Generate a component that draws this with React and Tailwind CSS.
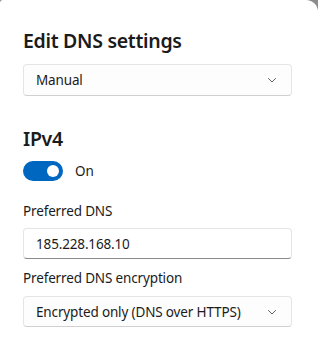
import React from 'react';

const Chevron = () => (
  <svg width="12" height="12" viewBox="0 0 12 12" fill="none" className="text-[#5f5f5f]">
    <path d="M2.5 4.5 6 8l3.5-3.5" stroke="currentColor" strokeWidth="1" strokeLinecap="round" strokeLinejoin="round" />
  </svg>
);

const Select = ({ value, h = 'h-[32px]' }) => (
  <div className={`flex ${h} items-center justify-between rounded-[4px] border border-[#e5e5e5] border-b-[#d0d0d0] bg-[#fdfdfd] pl-[12px] pr-[13px]`}>
    <span className="text-[13.5px] tracking-[-0.15px] text-[#1b1b1b]">{value}</span>
    <Chevron />
  </div>
);

const App = () => {
  return (
    <div className="h-[345px] w-[318px] bg-[#8c8c8c]" style={{ fontFamily: '"Noto Sans", "Open Sans", sans-serif' }}>
      <div className="h-full w-full rounded-tl-[3px] rounded-tr-[12px] bg-white pl-[23px] pr-[26px] pt-[27px]">
        <h1 className="text-[19.5px] font-semibold leading-[28px] tracking-[-0.3px] text-[#1b1b1b]">Edit DNS settings</h1>
        <div className="mt-[9px]">
          <Select value="Manual" />
        </div>

        <h2 className="mt-[30px] text-[19.5px] font-semibold leading-[26px] tracking-[-0.3px] text-[#1b1b1b]">IPv4</h2>
        <div className="mt-[9px] flex items-center gap-[12px]">
          <div className="flex h-[20px] w-[40px] items-center justify-end rounded-full bg-[#0067c0] pr-[4px]">
            <div className="h-[12px] w-[12px] rounded-full bg-white" />
          </div>
          <span className="text-[13.5px] tracking-[-0.15px] text-[#1b1b1b]">On</span>
        </div>

        <div className="mt-[20px] text-[13.5px] leading-[20px] tracking-[-0.15px] text-[#1b1b1b]">Preferred DNS</div>
        <div className="mt-[7px] flex h-[31px] items-center rounded-[4px] border border-[#e5e5e5] border-b-[#8a8a8a] bg-white pl-[12px]">
          <span className="text-[13.5px] tracking-[-0.15px] text-[#1b1b1b]">185.228.168.10</span>
        </div>

        <div className="mt-[9px] text-[13.5px] leading-[20px] tracking-[-0.15px] text-[#1b1b1b]">Preferred DNS encryption</div>
        <div className="mt-[8px]">
          <Select value="Encrypted only (DNS over HTTPS)" h="h-[31px]" />
        </div>
      </div>
    </div>
  );
};

export default App;
